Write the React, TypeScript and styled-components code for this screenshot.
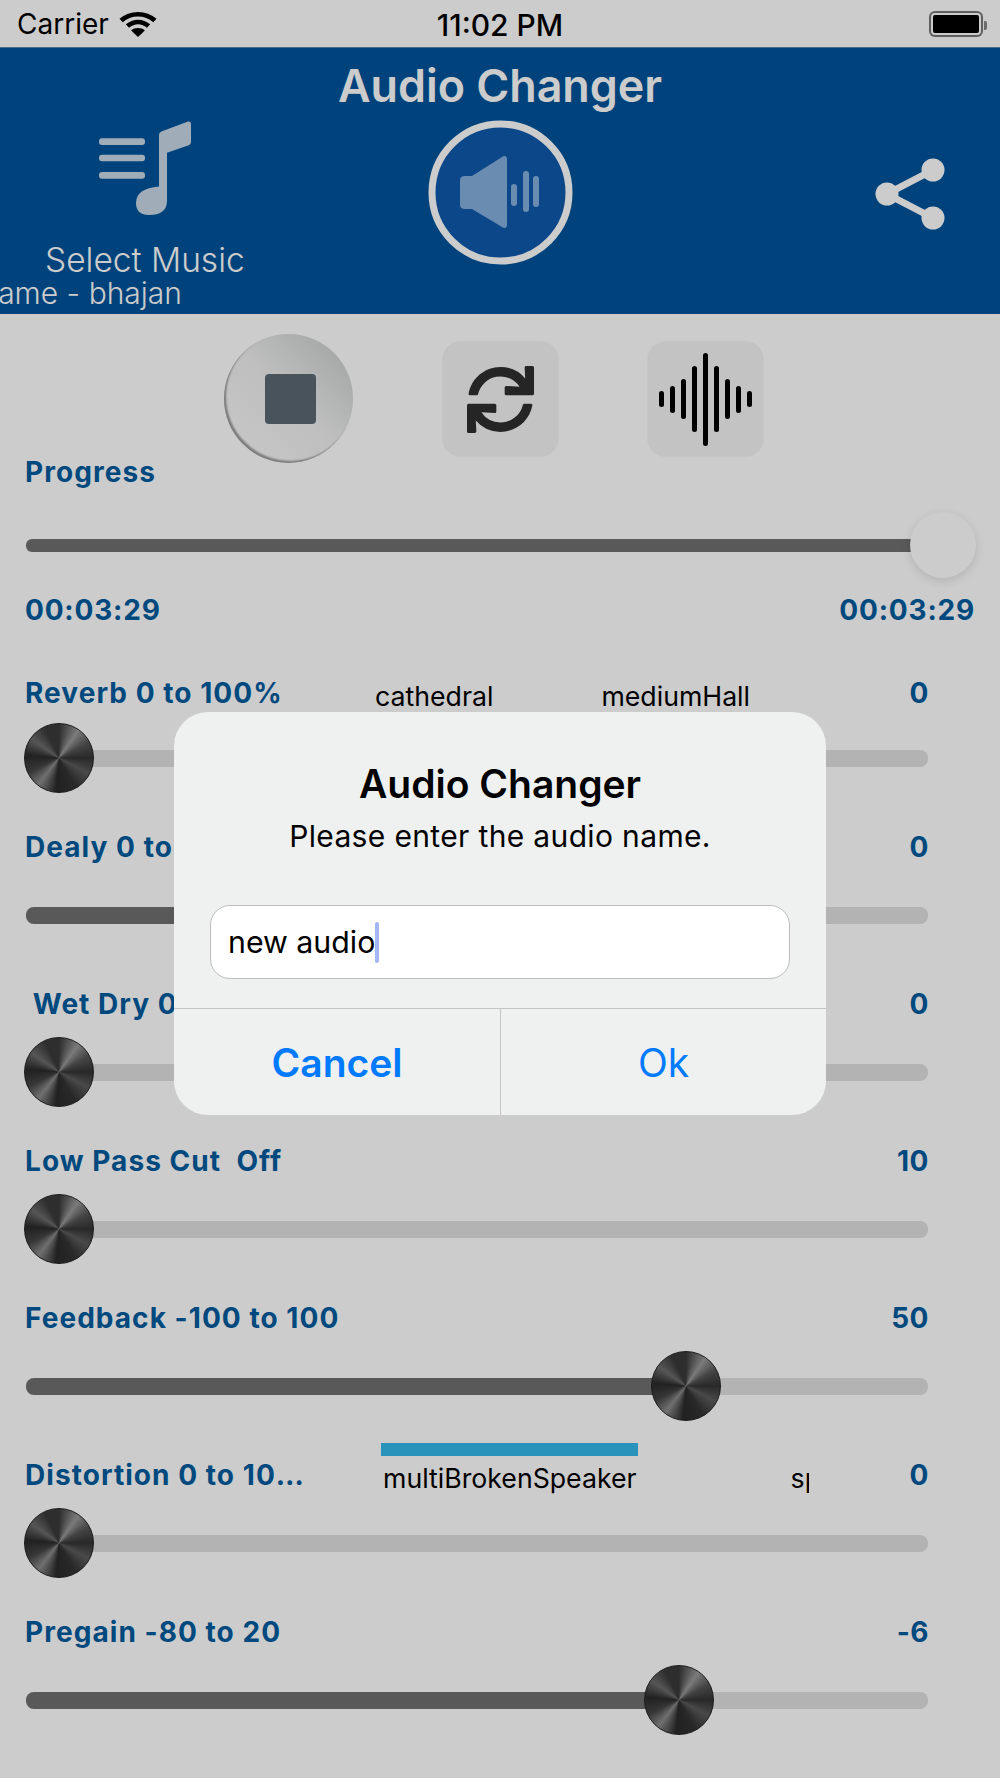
import * as React from 'react';
import styled, { createGlobalStyle } from 'styled-components';
import { FaSync } from 'react-icons/fa';

const GlobalStyle = createGlobalStyle`
    html, body {
        margin: 0;
        padding: 0;
        background: #fff;
    }
    body {
        font-family: Inter, "Liberation Sans", sans-serif;
    }
`;

const WAVE_BARS = [16, 27, 40, 66, 93, 66, 40, 27, 16];

type Preset = { name: string; offset: number; selected?: boolean; maxWidth?: number };

type Effect = {
    label: string;
    value: string;
    percent: number;
    short?: boolean;
    presets?: Preset[];
};

const EFFECTS: Effect[] = [
    {
        label: 'Reverb 0 to 100%',
        value: '0',
        percent: 0,
        presets: [
            { name: 'cathedral', offset: 5 },
            { name: 'mediumHall', offset: 108 },
        ],
    },
    { label: 'Dealy 0 to 2 sec', value: '0', percent: 50 },
    { label: ' Wet Dry 0 to 100%', value: '0', percent: 0 },
    { label: 'Low Pass Cut  Off', value: '10', percent: 0 },
    { label: 'Feedback -100 to 100', value: '50', percent: 69.5 },
    {
        label: 'Distortion 0 to 100%',
        value: '0',
        percent: 0,
        short: true,
        presets: [
            { name: 'multiBrokenSpeaker', offset: 13, selected: true },
            { name: 'speakerPhone', offset: 154, maxWidth: 18 },
        ],
    },
    { label: 'Pregain -80 to 20', value: '-6', percent: 68.7 },
];

function MusicIcon() {
    return (
        <svg width="92" height="94" viewBox="0 0 92 92" preserveAspectRatio="none" fill="#c9d9e6">
            <rect x="0" y="17" width="46" height="6.5" rx="3" />
            <rect x="0" y="33" width="46" height="6.5" rx="3" />
            <rect x="0" y="50" width="46" height="6.5" rx="3" />
            <path d="M60 14 Q60 11 63 10 L89 0.6 Q92 0 92 3 L92 20 Q92 23 89 24 L68 31 L68 78 Q68 92 50 92 Q37 92 37 80 Q37 66 60 64 Z" />
        </svg>
    );
}

function SpeakerIcon() {
    return (
        <svg width="145" height="145" viewBox="0 0 145 145">
            <circle cx="72.5" cy="72.5" r="68.5" fill="#1059ad" stroke="#fff" strokeWidth="7" />
            <path d="M32 60 Q32 56 37 56 L44 56 L74 37 Q79 34 79 40 L79 104 Q79 110 74 107 L44 89 L37 89 Q32 89 32 85 Z" fill="#85b0dc" />
            <rect x="83" y="64" width="6" height="22" rx="3" fill="#85b0dc" />
            <rect x="95" y="51" width="6" height="41" rx="3" fill="#85b0dc" />
            <rect x="105" y="56" width="6" height="31" rx="3" fill="#85b0dc" />
        </svg>
    );
}

function ShareIcon() {
    return (
        <svg width="70" height="72" viewBox="0 0 70 72" fill="#fff">
            <path d="M58 12 L12 36 L58 60" fill="none" stroke="#fff" strokeWidth="7" />
            <circle cx="58" cy="12" r="11.5" />
            <circle cx="12" cy="36" r="11.5" />
            <circle cx="58" cy="60" r="11.5" />
        </svg>
    );
}

function WifiIcon() {
    return (
        <svg width="38" height="26" viewBox="0 0 36 26" preserveAspectRatio="none" fill="none" stroke="#000">
            <path d="M2 9.5 C11 1 25 1 34 9.5" strokeWidth="4.5" />
            <path d="M8 15 C14 9.5 22 9.5 28 15" strokeWidth="4.5" />
            <path d="M18 26 L11.5 19.5 C15 16.3 21 16.3 24.5 19.5 Z" fill="#000" stroke="none" />
        </svg>
    );
}

function Slider({ percent }: { percent: number }) {
    return (
        <SliderBox>
            <Track>
                <Fill style={{ width: `${percent}%` }} />
                <Knob style={{ left: `${percent}%` }} />
            </Track>
        </SliderBox>
    );
}

function App() {
    return (
        <Screen>
            <GlobalStyle />
            <StatusBar>
                <Carrier>
                    Carrier
                    <WifiIcon />
                </Carrier>
                <Clock>11:02 PM</Clock>
                <Battery>
                    <BatteryLevel />
                </Battery>
            </StatusBar>

            <Header>
                <Title>Audio Changer</Title>
                <HeaderTools>
                    <MusicColumn>
                        <MusicIcon />
                        <SelectMusic>Select Music</SelectMusic>
                        <FileName>
                            <span>Audio name - bhajan</span>
                        </FileName>
                    </MusicColumn>
                    <SpeakerButton>
                        <SpeakerIcon />
                    </SpeakerButton>
                    <ShareButton>
                        <ShareIcon />
                    </ShareButton>
                </HeaderTools>
            </Header>

            <Transport>
                <StopButton>
                    <StopSquare />
                </StopButton>
                <SquareButton>
                    <FaSync size={67} color="#2f2f2f" />
                </SquareButton>
                <SquareButton>
                    <WaveBars>
                        {WAVE_BARS.map((height, i) => (
                            <WaveBar key={i} $height={height} />
                        ))}
                    </WaveBars>
                </SquareButton>
            </Transport>

            <ProgressBlock>
                <Label>Progress</Label>
                <ProgressTrack>
                    <ProgressThumb />
                </ProgressTrack>
                <TimeRow>
                    <span>00:03:29</span>
                    <span>00:03:29</span>
                </TimeRow>
            </ProgressBlock>

            <Effects>
                {EFFECTS.map(effect => (
                    <EffectRow key={effect.label}>
                        <EffectHead>
                            <LabelCell>
                                <Label $short={effect.short}>{effect.label}</Label>
                            </LabelCell>
                            <Picker>
                                {effect.presets?.map(preset => (
                                    <PickerItem
                                        key={preset.name}
                                        $offset={preset.offset}
                                        $selected={preset.selected}
                                        $maxWidth={preset.maxWidth}
                                    >
                                        {preset.name}
                                    </PickerItem>
                                ))}
                            </Picker>
                            <Value>{effect.value}</Value>
                        </EffectHead>
                        <Slider percent={effect.percent} />
                    </EffectRow>
                ))}
            </Effects>

            <Overlay>
                <Dialog>
                    <DialogTitle>Audio Changer</DialogTitle>
                    <DialogMessage>Please enter the audio name.</DialogMessage>
                    <InputBox>
                        new audio
                        <Caret />
                    </InputBox>
                    <DialogButtons>
                        <DialogButton $strong>Cancel</DialogButton>
                        <DialogButton>Ok</DialogButton>
                    </DialogButtons>
                </Dialog>
            </Overlay>
        </Screen>
    );
}

export default App;

const Screen = styled.div`
    position: relative;
    width: 1000px;
    height: 1778px;
    overflow: hidden;
    background: #fff;
`;

const StatusBar = styled.div`
    height: 47px;
    display: flex;
    align-items: center;
    justify-content: space-between;
    padding: 0 13px 0 17px;
    border-bottom: 1px solid #5d87a8;
    color: #000;
    background: #fff;
`;

const Carrier = styled.div`
    display: flex;
    align-items: center;
    gap: 10px;
    width: 200px;
    font-size: 28px;
`;

const Clock = styled.div`
    font-size: 30px;
    font-weight: 500;
    margin-right: 4px;
    padding-top: 2px;
`;

const Battery = styled.div`
    width: 200px;
    display: flex;
    justify-content: flex-end;
    &::after {
        content: '';
        width: 3px;
        height: 9px;
        margin: 8px 0 0 3px;
        background: #888;
        border-radius: 0 2px 2px 0;
    }
`;

const BatteryLevel = styled.div`
    width: 46px;
    height: 18px;
    background: #000;
    border: 2px solid #fff;
    border-radius: 4px;
    box-shadow: 0 0 0 2px #777;
`;

const Header = styled.div`
    height: 266px;
    background: #00549b;
    display: flex;
    flex-direction: column;
    color: #fff;
`;

const Title = styled.div`
    text-align: center;
    font-size: 44.8px;
    font-weight: 600;
    line-height: 48px;
    margin: 14px 0 1px;
`;

const HeaderTools = styled.div`
    display: flex;
    height: 203px;
    align-items: flex-start;
`;

const MusicColumn = styled.div`
    width: 290px;
    flex: none;
    display: flex;
    flex-direction: column;
    align-items: flex-start;
    padding-left: 99px;
    box-sizing: border-box;
    margin-top: 10px;
`;

const SelectMusic = styled.div`
    margin: 25px 0 0 -54px;
    font-size: 33.5px;
    line-height: 40px;
    font-weight: 300;
    white-space: nowrap;
`;

const FileName = styled.div`
    margin: -2px 0 0 -99px;
    width: 182px;
    display: flex;
    justify-content: flex-end;
    white-space: nowrap;
    font-size: 30px;
    line-height: 30px;
    font-weight: 300;
`;

const SpeakerButton = styled.div`
    margin: 9px 0 0 138px;
    height: 145px;
`;

const ShareButton = styled.div`
    margin: 47px 0 0 302px;
`;

const Transport = styled.div`
    display: flex;
    align-items: flex-start;
    gap: 90px;
    height: 129px;
    padding: 20px 0 0 224px;
`;

const StopButton = styled.div`
    width: 129px;
    height: 129px;
    flex: none;
    border-radius: 50%;
    display: flex;
    align-items: center;
    justify-content: center;
    background: linear-gradient(225deg, #c6c9c9 0%, #eeeeee 48%, #fbfbfb 100%);
    box-shadow: inset 2px -2px 2px #9a9a9a;
`;

const StopSquare = styled.div`
    width: 51px;
    height: 50px;
    margin-left: 3px;
    background: #5c6874;
    border-radius: 4px;
`;

const SquareButton = styled.div`
    width: 115px;
    height: 114px;
    flex: none;
    margin-top: 8px;
    display: flex;
    align-items: center;
    justify-content: center;
    background: #f4f4f4;
    border-radius: 18px;
    box-shadow: 0 0 2px #e4e4e4;
`;

const WaveBars = styled.div`
    display: flex;
    align-items: center;
    gap: 6px;
`;

const WaveBar = styled.div<{ $height: number }>`
    width: 5px;
    height: ${p => p.$height}px;
    background: #000;
    border-radius: 3px;
`;

const ProgressBlock = styled.div`
    padding: 0 25px;
    display: flex;
    flex-direction: column;
`;

const Label = styled.div<{ $short?: boolean }>`
    color: #005c9e;
    font-size: 28px;
    letter-spacing: 1.05px;
    font-weight: 700;
    white-space: pre;
    line-height: ${p => (p.$short ? '34px' : '18px')};
    height: ${p => (p.$short ? '34px' : '18px')};
    margin: ${p => (p.$short ? '-8px 0' : '0')};
    overflow: ${p => (p.$short ? 'hidden' : 'visible')};
    text-overflow: ellipsis;
    max-width: ${p => (p.$short ? '284px' : 'none')};
`;

const ProgressTrack = styled.div`
    position: relative;
    height: 13px;
    width: 885px;
    margin: 58px 0 0 1px;
    background: #707070;
    border-radius: 6px 0 0 6px;
`;

const ProgressThumb = styled.div`
    position: absolute;
    right: -65px;
    top: -27px;
    width: 66px;
    height: 66px;
    border-radius: 50%;
    background: #fff;
    box-shadow: 0 3px 10px rgba(0, 0, 0, 0.12);
`;

const TimeRow = styled.div`
    margin-top: 49px;
    display: flex;
    justify-content: space-between;
    color: #005c9e;
    font-size: 28px;
    letter-spacing: 0.8px;
    font-weight: 700;
    line-height: 18px;
`;

const Effects = styled.div`
    margin-top: 65px;
    display: flex;
    flex-direction: column;
`;

const EffectRow = styled.div`
    height: 157px;
    padding: 0 71px 0 25px;
`;

const EffectHead = styled.div`
    display: flex;
    align-items: center;
    height: 18px;
    ${EffectRow}:not(:first-child) & {
        position: relative;
        top: -3px;
    }
`;

const LabelCell = styled.div`
    width: 345px;
    flex: none;
`;

const Picker = styled.div`
    width: 440px;
    flex: none;
    display: flex;
    height: 18px;
    align-items: center;
`;

const PickerItem = styled.div<{ $offset: number; $selected?: boolean; $maxWidth?: number }>`
    flex: none;
    position: relative;
    margin-left: ${p => p.$offset}px;
    color: #000;
    font-size: 26.7px;
    line-height: 18px;
    white-space: nowrap;
    top: 3px;
    ${p =>
        p.$maxWidth
            ? `
                max-width: ${p.$maxWidth}px;
                height: 30px;
                line-height: 30px;
                overflow: hidden;
            `
            : ''}
    ${p =>
        p.$selected
            ? `&::before {
                content: '';
                position: absolute;
                left: -2px;
                right: -1px;
                top: -26px;
                height: 13px;
                background: #34b8ea;
            }`
            : ''}
`;

const Value = styled.div`
    flex: 1;
    text-align: right;
    color: #005c9e;
    font-size: 28px;
    letter-spacing: 0.5px;
    font-weight: 700;
    line-height: 18px;
`;

const SliderBox = styled.div`
    height: 70px;
    margin-top: 21px;
    display: flex;
    align-items: center;
`;

const Track = styled.div`
    position: relative;
    width: 902px;
    height: 17px;
    background: #e0e0e0;
    border-radius: 8px;
    margin-left: 1px;
`;

const Fill = styled.div`
    height: 100%;
    background: #707070;
    border-radius: 8px 0 0 8px;
`;

const Knob = styled.div`
    position: absolute;
    top: -27px;
    width: 70px;
    height: 70px;
    margin-left: -2px;
    box-sizing: border-box;
    border-radius: 50%;
    border: 1px solid #222;
    background: conic-gradient(
        #3a3a3a 0deg,
        #9a9a9a 35deg,
        #555 62deg,
        #333 90deg,
        #5c5c5c 118deg,
        #333 150deg,
        #2a2a2a 185deg,
        #8c8c8c 218deg,
        #444 245deg,
        #2a2a2a 275deg,
        #6c6c6c 305deg,
        #3a3a3a 335deg,
        #3a3a3a 360deg
    );
`;

const Overlay = styled.div`
    position: absolute;
    inset: 0;
    padding-top: 712px;
    display: flex;
    justify-content: center;
    align-items: flex-start;
    background: rgba(0, 0, 0, 0.2);
`;

const Dialog = styled.div`
    width: 652px;
    height: 403px;
    border-radius: 34px;
    background: #eff0f0;
    display: flex;
    flex-direction: column;
    align-items: center;
    overflow: hidden;
    color: #000;
`;

const DialogTitle = styled.div`
    margin-top: 50px;
    font-size: 39px;
    font-weight: 600;
    line-height: 44px;
`;

const DialogMessage = styled.div`
    margin-top: 12px;
    font-size: 30px;
    letter-spacing: 0.35px;
    line-height: 36px;
`;

const InputBox = styled.div`
    margin-top: 51px;
    width: 580px;
    height: 74px;
    flex: none;
    box-sizing: border-box;
    padding-left: 17px;
    display: flex;
    align-items: center;
    background: #fff;
    border: 1px solid #bdbdbd;
    border-radius: 20px;
    font-size: 30.3px;
`;

const Caret = styled.span`
    width: 4px;
    height: 41px;
    border-radius: 2px;
    background: #a3b6f7;
`;

const DialogButtons = styled.div`
    margin-top: 29px;
    width: 100%;
    flex: 1;
    display: grid;
    grid-template-columns: 1fr 1fr;
    border-top: 1px solid #c4c4c4;
`;

const DialogButton = styled.div<{ $strong?: boolean }>`
    display: flex;
    align-items: center;
    justify-content: center;
    color: #007aff;
    font-size: 39px;
    font-weight: ${p => (p.$strong ? 600 : 400)};
    & + & {
        border-left: 1px solid #c4c4c4;
    }
`;
